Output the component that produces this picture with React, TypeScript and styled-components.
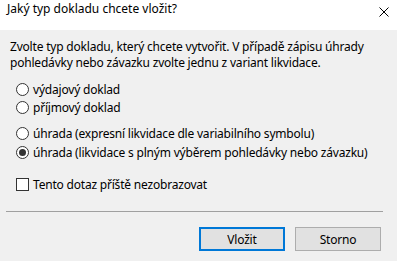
import React, { useState } from 'react';
import styled, { createGlobalStyle } from 'styled-components';

const GlobalStyle = createGlobalStyle`
  html, body {
    margin: 0;
    padding: 0;
    background: #f0f0f0;
  }
  body {
    font-family: "Noto Sans", "Open Sans", sans-serif;
    font-size: 12px;
    color: #000;
  }
`;

const Dialog = styled.div`
  width: 397px;
  height: 261px;
  display: flex;
  flex-direction: column;
  background: #f0f0f0;
  overflow: hidden;
`;

const TitleBar = styled.div`
  height: 30px;
  flex: none;
  background: #fff;
  display: flex;
  align-items: flex-start;
  justify-content: space-between;
  padding: 0 8px 0 7px;
`;

const Title = styled.div`
  font-size: 12px;
  line-height: 18px;
`;

const Close = styled.div`
  width: 10px;
  height: 10px;
  margin-top: 4px;
`;

const Body = styled.div`
  flex: 1;
  display: flex;
  flex-direction: column;
  padding: 9px 10px 0 10px;
`;

const Text = styled.p`
  margin: 0;
  line-height: 16px;
  letter-spacing: -0.2px;
`;

const Group = styled.div<{ $top: number }>`
  display: flex;
  flex-direction: column;
  margin-top: ${p => p.$top}px;
  padding-left: 6px;
`;

const Option = styled.label<{ $h: number }>`
  display: flex;
  align-items: center;
  height: ${p => p.$h}px;
  gap: 4px;
  letter-spacing: -0.2px;
`;

const Radio = styled.span<{ $on?: boolean }>`
  width: 11px;
  height: 11px;
  border: 1px solid #333;
  border-radius: 50%;
  background: #fff;
  display: flex;
  align-items: center;
  justify-content: center;
  &::after {
    content: '';
    width: 7px;
    height: 7px;
    border-radius: 50%;
    background: ${p => (p.$on ? '#333' : 'transparent')};
  }
`;

const Check = styled.span`
  width: 11px;
  height: 11px;
  border: 1px solid #333;
  background: #fff;
`;

const Rule = styled.div<{ $top: number }>`
  height: 1px;
  background: #a0a0a0;
  margin: ${p => p.$top}px 4px 0 -4px;
`;

const Footer = styled.div`
  display: flex;
  justify-content: flex-end;
  gap: 10px;
  padding: 15px 6px 0 0;
`;

const Button = styled.button<{ $default?: boolean }>`
  width: 86px;
  height: 24px;
  font-family: inherit;
  font-size: 12px;
  color: #000;
  background: #e1e1e1;
  border: ${p => (p.$default ? '2px solid #0078d7' : '1px solid #adadad')};
  padding: 0;
  letter-spacing: -0.2px;
`;

const options = [
  'úhrada (expresní likvidace dle variabilního symbolu)',
  'úhrada (likvidace s plným výběrem pohledávky nebo závazku)',
];

export default function App() {
  const [choice, setChoice] = useState(3);
  return (
    <Dialog>
      <GlobalStyle />
      <TitleBar>
        <Title>Jaký typ dokladu chcete vložit?</Title>
        <Close>
          <svg width="10" height="10" viewBox="0 0 10 10">
            <path d="M0.5 0.5L9.5 9.5M9.5 0.5L0.5 9.5" stroke="#000" strokeWidth="1" />
          </svg>
        </Close>
      </TitleBar>
      <Body>
        <Text>
          Zvolte typ dokladu, který chcete vytvořit. V případě zápisu úhrady
          <br />
          pohledávky nebo závazku zvolte jednu z variant likvidace.
        </Text>
        <Group $top={9}>
          <Option $h={18} onClick={() => setChoice(0)}>
            <Radio $on={choice === 0} />
            výdajový doklad
          </Option>
          <Option $h={18} onClick={() => setChoice(1)}>
            <Radio $on={choice === 1} />
            příjmový doklad
          </Option>
        </Group>
        <Group $top={8}>
          {options.map((o, i) => (
            <Option $h={19} key={o} onClick={() => setChoice(i + 2)}>
              <Radio $on={choice === i + 2} />
              {o}
            </Option>
          ))}
        </Group>
        <Group $top={13}>
          <Option $h={18}>
            <Check />
            Tento dotaz příště nezobrazovat
          </Option>
        </Group>
        <Rule $top={18} />
        <Footer>
          <Button $default>Vložit</Button>
          <Button>Storno</Button>
        </Footer>
      </Body>
    </Dialog>
  );
}
